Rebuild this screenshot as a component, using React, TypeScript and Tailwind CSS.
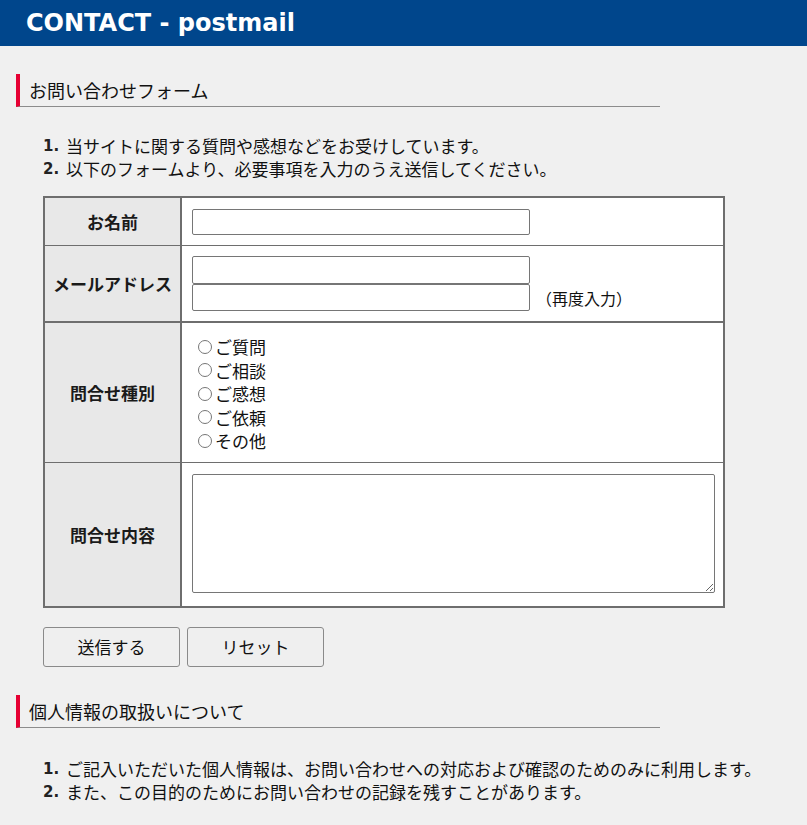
import { useState } from "react";

const jp = { fontFamily: '"Noto Sans CJK JP", "Noto Sans", sans-serif' };
const kinds = ["ご質問", "ご相談", "ご感想", "ご依頼", "その他"];

function Heading({ children }: { children: string }) {
  return (
    <h2 className="ml-[16px] flex h-[33px] w-[644px] items-center border-b border-l-4 border-b-[#8c8c8c] border-l-[#e60033] pl-[9px] text-[18px] font-normal text-[#111]">
      {children}
    </h2>
  );
}

function Steps({ items }: { items: string[] }) {
  return (
    <ol className="ml-[43px] text-[17px] leading-[23px] text-[#111]">
      {items.map((item, i) => (
        <li key={item} className="flex h-[23px]">
          <span className="w-[23px] pt-[1px] text-[15px] font-bold leading-[23px] text-[#222]" style={{ fontFamily: '"DejaVu Sans", sans-serif' }}>{i + 1}.</span>
          <span>{item}</span>
        </li>
      ))}
    </ol>
  );
}

const field = "block border border-[#767676] rounded-[2px] bg-white outline-none";
const label = "flex w-[137px] shrink-0 items-center justify-center border-r-2 border-[#6e6e6e] bg-[#e8e8e8] text-[17px] font-bold text-[#1a1a1a]";

export default function App() {
  const [kind, setKind] = useState("");

  return (
    <div className="min-h-[825px] bg-[#f0f0f0] pb-8" style={jp}>
      <header className="flex h-[46px] items-center bg-[#00468c] pl-[26px]">
        <h1 className="text-[24px] font-bold text-white" style={{ fontFamily: '"DejaVu Sans", Verdana, sans-serif' }}>CONTACT - postmail</h1>
      </header>

      <div className="mt-[28px]">
        <Heading>お問い合わせフォーム</Heading>
      </div>
      <div className="mt-[27px]">
        <Steps items={["当サイトに関する質問や感想などをお受けしています。", "以下のフォームより、必要事項を入力のうえ送信してください。"]} />
      </div>

      <form className="mt-[16px]" onSubmit={(event) => event.preventDefault()}>
        <div className="ml-[43px] w-[682px] border-2 border-[#6e6e6e] bg-white">
          <div className="flex h-[48px] border-b border-[#6e6e6e]">
            <div className={label}>お名前</div>
            <div className="pl-[10px] pt-[11px]">
              <input className={`${field} h-[26px] w-[338px]`} type="text" />
            </div>
          </div>
          <div className="flex h-[77px] border-b-2 border-[#6e6e6e]">
            <div className={label}>メールアドレス</div>
            <div className="pl-[10px] pt-[10px]">
              <input className={`${field} h-[28px] w-[338px]`} type="email" />
              <div className="flex items-center">
                <input className={`${field} h-[27px] w-[338px]`} type="email" />
                <span className="ml-[6px] text-[16px] text-[#111]">（再度入力）</span>
              </div>
            </div>
          </div>
          <div className="flex h-[140px] border-b border-[#6e6e6e]">
            <div className={label}>問合せ種別</div>
            <div className="pl-[16px] pt-[12px] text-[17px] leading-[23.5px] text-[#111]">
              {kinds.map((k) => (
                <label key={k} className="flex items-center">
                  <input checked={kind === k} className="m-0 mr-[3px] h-[14px] w-[14px] accent-[#767676]" name="kind" onChange={() => setKind(k)} type="radio" />
                  {k}
                </label>
              ))}
            </div>
          </div>
          <div className="flex h-[143px]">
            <div className={label}>問合せ内容</div>
            <div className="pl-[10px] pt-[11px]">
              <textarea className={`${field} h-[119px] w-[523px]`} />
            </div>
          </div>
        </div>

        <div className="ml-[43px] mt-[19px] flex gap-[7px]">
          <button className="h-[40px] w-[137px] rounded-[3px] border border-[#8a8a8a] bg-[#efefef] text-[17px] text-[#111]" type="submit">送信する</button>
          <button className="h-[40px] w-[137px] rounded-[3px] border border-[#8a8a8a] bg-[#efefef] text-[17px] text-[#111]" type="reset">リセット</button>
        </div>
      </form>

      <div className="mt-[28px]">
        <Heading>個人情報の取扱いについて</Heading>
      </div>
      <div className="mt-[29px]">
        <Steps items={["ご記入いただいた個人情報は、お問い合わせへの対応および確認のためのみに利用します。", "また、この目的のためにお問い合わせの記録を残すことがあります。"]} />
      </div>
    </div>
  );
}
